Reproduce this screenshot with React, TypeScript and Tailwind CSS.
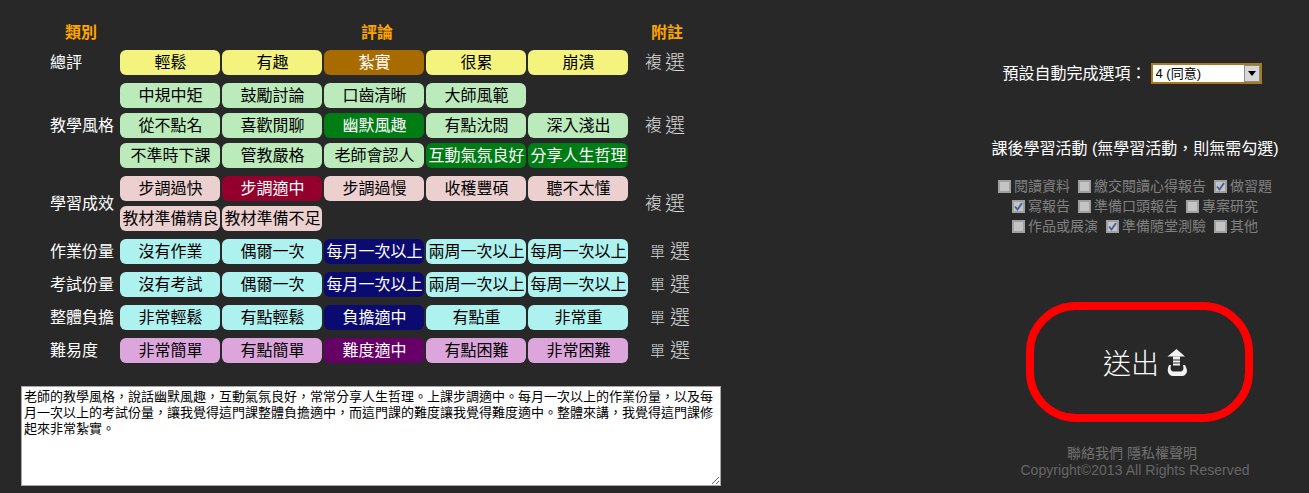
import { ChangeEvent, useState } from "react";

const FONT = "font-['Liberation_Sans','Noto_Sans_CJK_TC',sans-serif]";

type Tone = "yellow" | "green" | "pink" | "cyan" | "purple";

const toneOff: Record<Tone, string> = {
  yellow: "bg-[#f3f37e] text-black",
  green: "bg-[#bbeabb] text-black",
  pink: "bg-[#ecd0d0] text-black",
  cyan: "bg-[#aef2f0] text-black",
  purple: "bg-[#dca6dc] text-black",
};

const toneOn: Record<string, string> = {
  brown: "bg-[#a86b00] text-white",
  green: "bg-[#007c14] text-white",
  crimson: "bg-[#93002d] text-white",
  navy: "bg-[#0a0a70] text-white",
  purple: "bg-[#660066] text-white",
};

type Group = {
  label: string;
  tone: Tone;
  on: string;
  note: string;
  options: string[];
  selected: string[];
};

const groups: Group[] = [
  { label: "總評", tone: "yellow", on: "brown", note: "複選", options: ["輕鬆", "有趣", "紮實", "很累", "崩潰"], selected: ["紮實"] },
  {
    label: "教學風格",
    tone: "green",
    on: "green",
    note: "複選",
    options: ["中規中矩", "鼓勵討論", "口齒清晰", "大師風範", "", "從不點名", "喜歡閒聊", "幽默風趣", "有點沈悶", "深入淺出", "不準時下課", "管教嚴格", "老師會認人", "互動氣氛良好", "分享人生哲理"],
    selected: ["幽默風趣", "互動氣氛良好", "分享人生哲理"],
  },
  {
    label: "學習成效",
    tone: "pink",
    on: "crimson",
    note: "複選",
    options: ["步調過快", "步調適中", "步調過慢", "收穫豐碩", "聽不太懂", "教材準備精良", "教材準備不足"],
    selected: ["步調適中"],
  },
  { label: "作業份量", tone: "cyan", on: "navy", note: "單選", options: ["沒有作業", "偶爾一次", "每月一次以上", "兩周一次以上", "每周一次以上"], selected: ["每月一次以上"] },
  { label: "考試份量", tone: "cyan", on: "navy", note: "單選", options: ["沒有考試", "偶爾一次", "每月一次以上", "兩周一次以上", "每周一次以上"], selected: ["每月一次以上"] },
  { label: "整體負擔", tone: "cyan", on: "navy", note: "單選", options: ["非常輕鬆", "有點輕鬆", "負擔適中", "有點重", "非常重"], selected: ["負擔適中"] },
  { label: "難易度", tone: "purple", on: "purple", note: "單選", options: ["非常簡單", "有點簡單", "難度適中", "有點困難", "非常困難"], selected: ["難度適中"] },
];

const activities = [
  [
    { name: "閱讀資料", checked: false },
    { name: "繳交閱讀心得報告", checked: false },
    { name: "做習題", checked: true },
  ],
  [
    { name: "寫報告", checked: true },
    { name: "準備口頭報告", checked: false },
    { name: "專案研究", checked: false },
  ],
  [
    { name: "作品或展演", checked: false },
    { name: "準備隨堂測驗", checked: true },
    { name: "其他", checked: false },
  ],
];

const comment =
  "老師的教學風格，說話幽默風趣，互動氣氛良好，常常分享人生哲理。上課步調適中。每月一次以上的作業份量，以及每月一次以上的考試份量，讓我覺得這門課整體負擔適中，而這門課的難度讓我覺得難度適中。整體來講，我覺得這門課修起來非常紮實。";

function Note({ text }: { text: string }) {
  const single = text === "單選";
  return (
    <div className={`flex items-center text-[18px] leading-[20px] font-light text-[#d8d8d8] ${single ? "ml-[22px] gap-[5px]" : "ml-[17px] gap-[3px]"}`}>
      <span className={single ? "text-[15px]" : "text-[17px]"}>{text[0]}</span>
      <span className="text-[20px]">{text[1]}</span>
    </div>
  );
}

function RatingGroup({ group }: { group: Group }) {
  return (
    <div className="flex items-center">
      <div className="w-[70px] text-[16px] text-white">{group.label}</div>
      <div className="grid w-[508px] grid-cols-[repeat(5,100px)] gap-x-[2px] gap-y-[5px]">
        {group.options.map((opt, i) =>
          opt === "" ? (
            <div key={i} />
          ) : (
            <button
              key={i}
              className={`h-[25px] rounded-[6px] pt-[1px] pl-[1px] text-center text-[16px] leading-[24px] whitespace-nowrap ${group.selected.includes(opt) ? toneOn[group.on] : toneOff[group.tone]}`}
            >
              {opt}
            </button>
          ),
        )}
      </div>
      <Note text={group.note} />
    </div>
  );
}

function Activity({ name, checked }: { name: string; checked: boolean }) {
  return (
    <label className="flex items-center gap-[3px]">
      <span className="flex h-[13px] w-[13px] items-center justify-center border-2 border-[#a0a0a0] bg-[#c4c4c4]">
        {checked && (
          <svg viewBox="0 0 9 9" className="h-[9px] w-[9px]">
            <path d="M1 4.5 L3.5 7.5 L8 1" fill="none" stroke="#4a5a9e" strokeWidth="1.8" />
          </svg>
        )}
      </span>
      <span>{name}</span>
    </label>
  );
}

function UploadGlyph() {
  return (
    <svg viewBox="0 0 22 27" className="h-[27px] w-[22px]">
      <polygon points="10.5,0 19,7.5 1.5,7.5" fill="#f2f2f2" />
      <rect x="7" y="7.5" width="7" height="3" fill="#f2f2f2" />
      <rect x="7" y="11.5" width="7" height="2" fill="#f2f2f2" />
      <rect x="7" y="14.5" width="7" height="2" fill="#f2f2f2" />
      <path d="M3 16 Q0 23 4 26 Q5 27 7 27 H16 Q18 27 19 26 Q23 23 19 16 H17 Q18.5 22 15 22.5 H7 Q3.5 22 5 16 Z" fill="#f2f2f2" />
    </svg>
  );
}

export default function App() {
  const [text, setText] = useState(comment);
  return (
    <div className={`flex h-[493px] w-[1309px] overflow-hidden bg-[#282828] ${FONT}`}>
      <div className="w-[985px] pt-[23px] pl-[21px]">
        <div className="ml-[29px] flex flex-col gap-[8px]">
          <div className="flex h-[19px] items-center pt-[1px] text-[16px] font-bold text-[#ffa500]">
            <div className="w-[70px] pl-[15px]">類別</div>
            <div className="w-[508px] pl-[6px] text-center">評論</div>
            <div className="ml-[23px]">附註</div>
          </div>
          {groups.map((g) => (
            <RatingGroup key={g.label} group={g} />
          ))}
        </div>
        <textarea
          value={text}
          onChange={(e: ChangeEvent<HTMLTextAreaElement>) => setText(e.target.value)}
          className="mt-[23px] block h-[100px] w-[700px] border border-[#a8a8a8] bg-white px-[2px] py-[2px] text-[13px] leading-[16px] text-black"
        />
      </div>

      <div className="flex w-[300px] flex-col items-center pt-[63px]">
        <div className="mr-[6px] flex items-center gap-[4px] text-[16px] leading-[21px] text-white">
          <span>預設自動完成選項：</span>
          <div className="relative h-[21px] w-[111px]">
            <select className="block h-[21px] w-[111px] appearance-none rounded-none border-2 border-[#a87a20] bg-white pl-[3px] text-[13px] leading-[17px] text-black">
              <option>4 (同意)</option>
            </select>
            <div className="absolute top-[2px] right-[2px] flex h-[17px] w-[16px] items-center justify-center border border-[#8c8c8c] bg-[#d8d8d8]">
              <svg viewBox="0 0 8 5" className="h-[5px] w-[8px]">
                <polygon points="0,0 8,0 4,5" fill="#000" />
              </svg>
            </div>
          </div>
        </div>

        <div className="mt-[55px] h-[20px] text-[16px] leading-[20px] whitespace-nowrap text-white">
          課後學習活動 (無學習活動，則無需勾選)
        </div>

        <div className="mt-[17px] flex flex-col items-center text-[14px] leading-[20px] text-[#808080]">
          {activities.map((row, i) => (
            <div key={i} className="flex h-[20px] items-center gap-[8px]">
              {row.map((a) => (
                <Activity key={a.name} name={a.name} checked={a.checked} />
              ))}
            </div>
          ))}
        </div>

        <button className="mt-[66px] ml-[9px] flex h-[120px] w-[227px] shrink-0 items-center justify-center gap-[7px] rounded-[50px] border-[8px] border-[#ff0000] pl-[12px] text-[28px] font-light text-white">
          <span className="mt-[6px]">送出</span>
          <UploadGlyph />
        </button>

        <div className="mt-[23px] flex flex-col items-center text-[14px] leading-[17px] text-[#666666]">
          <div className="mr-[6px] text-[#707070]">聯絡我們 隱私權聲明</div>
          <div className="tracking-[0.05px]">Copyright©2013 All Rights Reserved</div>
        </div>
      </div>
    </div>
  );
}
